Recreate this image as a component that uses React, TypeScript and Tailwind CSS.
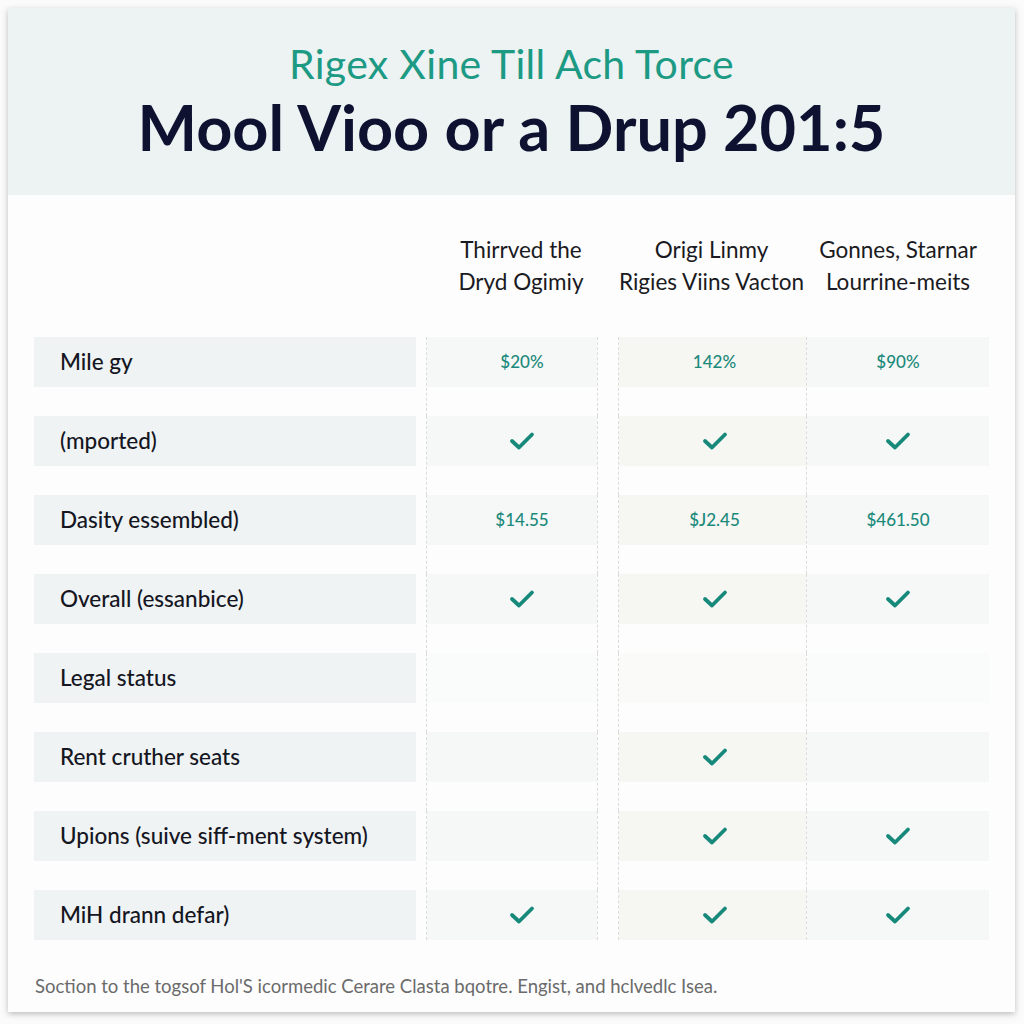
import React from 'react';

type Cell = string | boolean | null;

const rows: { label: string; cells: Cell[] }[] = [
  { label: 'Mile gy', cells: ['$20%', '142%', '$90%'] },
  { label: '(mported)', cells: [true, true, true] },
  { label: 'Dasity essembled)', cells: ['$14.55', '$J2.45', '$461.50'] },
  { label: 'Overall (essanbice)', cells: [true, true, true] },
  { label: 'Legal status', cells: [null, null, null] },
  { label: 'Rent cruther seats', cells: [null, true, null] },
  { label: 'Upions (suive siff-ment system)', cells: [null, true, true] },
  { label: 'MiH drann defar)', cells: [true, true, true] },
];

function Check() {
  return (
    <svg width="26" height="20" viewBox="0 0 26 20" fill="none">
      <polyline points="3,10 10,16.5 23,3.5" stroke="#17897a" strokeWidth="3.8" strokeLinecap="round" strokeLinejoin="round" />
    </svg>
  );
}

function CellContent({ v }: { v: Cell }) {
  if (v === true) return <Check />;
  if (typeof v === 'string') return <span className="text-[17px] font-medium text-[#1b8a7b]">{v}</span>;
  return null;
}

export default function App() {
  return (
    <div className="w-[1024px] h-[1024px] bg-[#fbfbfb] pt-2 pl-2" style={{ fontFamily: 'Lato, "Open Sans", sans-serif' }}>
      <div className="w-[1007px] h-[1004px] bg-[#fdfdfd] shadow-[0_2px_6px_rgba(0,0,0,0.25)] flex flex-col">
        {/* header */}
        <div className="h-[187px] bg-[#edf2f3] flex flex-col items-center pt-[32px]">
          <div className="text-[41px] leading-[48px] text-[#1d9a84] tracking-[0.3px]">Rigex Xine Till Ach Torce</div>
          <div className="text-[63px] leading-[74px] font-bold text-[#0e1230] mt-[2px]">Mool Vioo or a Drup 201:5</div>
        </div>

        {/* column headings */}
        <div className="flex pl-[26px] h-[142px] items-center">
          <div className="w-[382px]" />
          <div className="w-[190px] ml-[10px] text-center text-[22.5px] leading-[32px] text-[#1a1a22] whitespace-nowrap">Thirrved the<br />Dryd Ogimiy</div>
          <div className="w-[191px] text-center text-[22.5px] leading-[32px] text-[#1a1a22] whitespace-nowrap">Origi Linmy<br />Rigies Viins Vacton</div>
          <div className="w-[182px] text-center text-[22.5px] leading-[32px] text-[#1a1a22] whitespace-nowrap">Gonnes, Starnar<br />Lourrine-meits</div>
        </div>

        {/* rows */}
        <div className="flex flex-col pl-[26px]">
          {rows.map((r, i) => (
            <div key={i} className={`flex ${i === rows.length - 1 ? 'h-[50px]' : 'h-[79px]'}`}>
              <div className="w-[382px] h-[50px] bg-[#eff3f4] flex items-center pl-[26px] text-[22.5px] font-medium text-[#15161f]">{r.label}</div>
              <div className="w-[10px]" />
              <div className="w-[172px] border-l border-r border-dashed border-[#dcdcdc]">
                <div className={`h-[50px] flex items-center justify-center pl-[20px] ${i === 4 ? 'bg-[#fafbfb]' : 'bg-[#f6f8f8]'}`}>
                  <CellContent v={r.cells[0]} />
                </div>
              </div>
              <div className="w-[20px]" />
              <div className="w-[189px] border-l border-r border-dashed border-[#dcdcdc]">
                <div className={`h-[50px] flex items-center justify-center pl-[4px] ${i === 4 ? 'bg-[#fafaf9]' : 'bg-[#f6f6f3]'}`}>
                  <CellContent v={r.cells[1]} />
                </div>
              </div>
              <div className="w-[182px]">
                <div className={`h-[50px] flex items-center justify-center ${i === 4 ? 'bg-[#fafbfb]' : 'bg-[#f6f8f8]'}`}>
                  <CellContent v={r.cells[2]} />
                </div>
              </div>
            </div>
          ))}
        </div>

        {/* footnote */}
        <div className="pl-[27px] mt-[33px] text-[18.5px] text-[#6b6b6b] whitespace-nowrap">
          Soction to the togsof Hol'S icormedic Cerare Clasta bqotre. Engist, and hclvedlc Isea.
        </div>
      </div>
    </div>
  );
}
